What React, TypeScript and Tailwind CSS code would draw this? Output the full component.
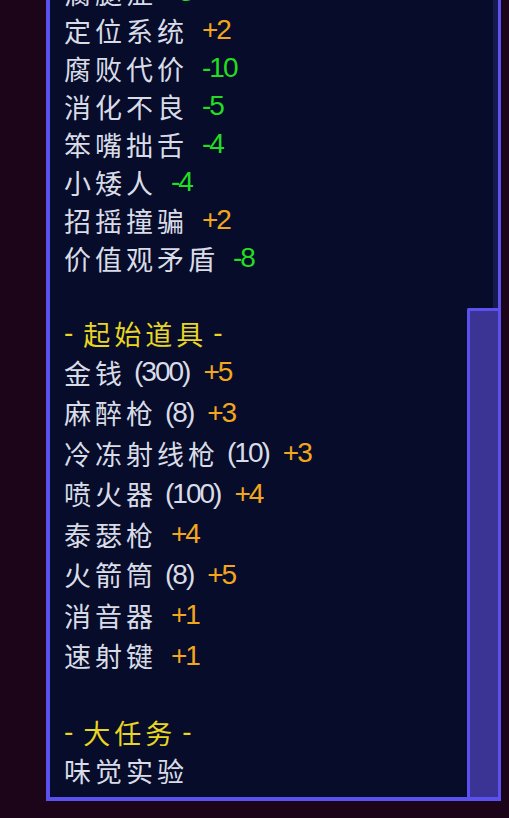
import React from "react";

type Entry = { name: string; qty?: string; value?: number };

const CJK = "font-['Noto_Sans_CJK_SC','Noto_Sans',sans-serif]";
const NUM = "font-['Liberation_Sans',Arial,sans-serif] tracking-[-2px]";

const TRAITS: Entry[] = [
  { name: "瘸腿症", value: -3 },
  { name: "定位系统", value: 2 },
  { name: "腐败代价", value: -10 },
  { name: "消化不良", value: -5 },
  { name: "笨嘴拙舌", value: -4 },
  { name: "小矮人", value: -4 },
  { name: "招摇撞骗", value: 2 },
  { name: "价值观矛盾", value: -8 },
];

const ITEMS: Entry[] = [
  { name: "金钱", qty: "(300)", value: 5 },
  { name: "麻醉枪", qty: "(8)", value: 3 },
  { name: "冷冻射线枪", qty: "(10)", value: 3 },
  { name: "喷火器", qty: "(100)", value: 4 },
  { name: "泰瑟枪", value: 4 },
  { name: "火箭筒", qty: "(8)", value: 5 },
  { name: "消音器", value: 1 },
  { name: "速射键", value: 1 },
];

function Row({ entry, tall }: { entry: Entry; tall?: boolean }) {
  const { name, qty, value } = entry;
  return (
    <div className={`flex items-center ${tall ? "h-[40.5px]" : "h-[38px]"}`}>
      <span className={`${CJK} text-[27px] leading-none tracking-[4px] text-[#d9dce7]`}>{name}</span>
      {qty && (
        <span className={`${NUM} ml-[8px] text-[28px] leading-none text-[#d9dce7]`}>{qty}</span>
      )}
      {value !== undefined && (
        <span
          className={`${NUM} ml-[14px] text-[28px] leading-none ${
            value > 0 ? "text-[#f2a61c]" : "text-[#22dd22]"
          }`}
        >
          {value > 0 ? `+${value}` : `-${Math.abs(value)}`}
        </span>
      )}
    </div>
  );
}

function Heading({ title }: { title: string }) {
  return (
    <div className="flex h-[38px] items-center text-[#e8d622]">
      <span className={`${NUM} text-[28px] leading-none`}>-</span>
      <span className={`${CJK} ml-[12px] text-[27px] leading-none tracking-[4px]`}>{title}</span>
      <span className={`${NUM} ml-[6px] text-[28px] leading-none`}>-</span>
    </div>
  );
}

export default function App() {
  return (
    <div className="h-[818px] w-[509px] overflow-hidden bg-[#1c0519]">
      <div className="-mt-[40px] ml-[46px] flex w-[455px] border-b-4 border-l-4 border-r-[3px] border-[#5b51f0] bg-[#060c29]">
        {/* list */}
        <div className="flex-1 pb-[8px] pl-[14px] pt-[13px]">
          {TRAITS.map((t) => (
            <Row key={t.name} entry={t} />
          ))}
          <div className="h-[37px]" />
          <Heading title="起始道具" />
          {ITEMS.map((t) => (
            <Row key={t.name} entry={t} tall />
          ))}
          <div className="h-[37px]" />
          <Heading title="大任务" />
          <Row entry={{ name: "味觉实验" }} />
        </div>

        {/* scrollbar */}
        <div className="flex w-[31px] flex-col">
          <div className="flex h-[348px] justify-end">
            <div className="w-[5px] bg-[#141a4c]" />
          </div>
          <div className="flex-1 rounded-tl-[2px] border-l-[3px] border-t-[3px] border-[#5b51f0] bg-[#3b3495]" />
        </div>
      </div>
    </div>
  );
}
